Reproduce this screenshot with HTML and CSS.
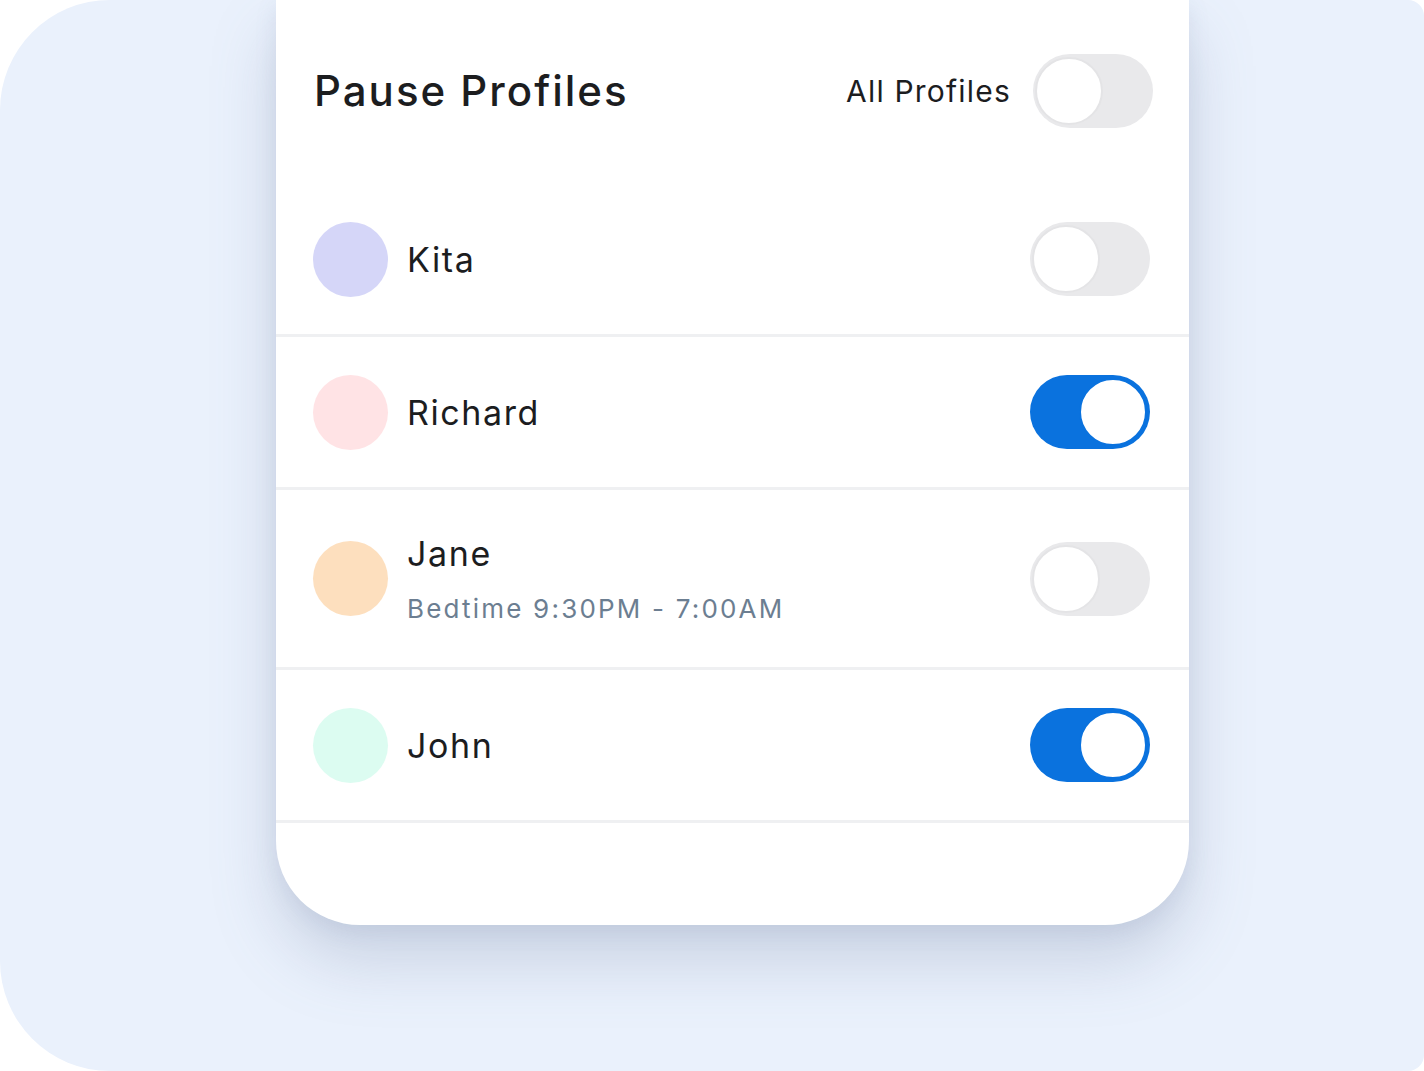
FILE: index.html
```html
<!doctype html>
<html lang="en">
    <head>
        <title>Pause Profiles</title>
        <meta charset="utf-8" />
        <meta name="viewport" content="width=device-width, initial-scale=1"/>
        <link rel="stylesheet" href="styles.css">
    </head>
    <body>
        <div class="panel">
            <div class="card">
                <div class="card-head">
                    <h1>Pause Profiles</h1>
                    <div class="all">
                        <span>All Profiles</span>
                        <span class="switch" role="switch" aria-checked="false"></span>
                    </div>
                </div>

                <div class="profile">
                    <span class="avatar kita"></span>
                    <div class="who">
                        <div class="name">Kita</div>
                    </div>
                    <span class="switch" role="switch" aria-checked="false"></span>
                </div>

                <div class="profile">
                    <span class="avatar richard"></span>
                    <div class="who">
                        <div class="name">Richard</div>
                    </div>
                    <span class="switch" role="switch" aria-checked="true"></span>
                </div>

                <div class="profile tall">
                    <span class="avatar jane"></span>
                    <div class="who">
                        <div class="name">Jane</div>
                        <div class="note">Bedtime 9:30PM - 7:00AM</div>
                    </div>
                    <span class="switch" role="switch" aria-checked="false"></span>
                </div>

                <div class="profile">
                    <span class="avatar john"></span>
                    <div class="who">
                        <div class="name">John</div>
                    </div>
                    <span class="switch" role="switch" aria-checked="true"></span>
                </div>
            </div>
        </div>
    </body>
</html>
```

FILE: styles.css
```css
body {
    margin: 0;
    background-color: #fff;
    font-family: Inter, "Noto Sans", sans-serif;
    font-variant-ligatures: none;
    color: #1c1d1f;
}
.panel {
    background-color: #eaf1fc;
    border-radius: 110px 16px 16px 110px;
    height: 1071px;
    overflow: hidden;
    padding-left: 276px;
    box-sizing: border-box;
}
.card {
    background-color: #fff;
    width: 913px;
    height: 925px;
    border-radius: 0 0 84px 84px;
    box-shadow: 0 36px 64px rgba(110, 125, 160, 0.26), 0 6px 22px rgba(110, 125, 160, 0.12);
}
.card-head {
    display: flex;
    align-items: center;
    justify-content: space-between;
    height: 184px;
    padding: 0 36px 0 38px;
}
.card-head h1 {
    margin: 0 0 4px;
    font-size: 42px;
    font-weight: 500;
    letter-spacing: 2px;
}
.all {
    display: flex;
    align-items: center;
    gap: 22px;
    font-size: 30px;
    letter-spacing: 1.2px;
    margin-bottom: 2px;
}
.profile {
    display: flex;
    align-items: center;
    height: 150px;
    padding: 0 39px 0 37px;
    border-bottom: 3px solid #eff0f2;
}
.profile.tall {
    height: 177px;
}
.avatar {
    width: 75px;
    height: 75px;
    border-radius: 50%;
    flex: none;
}
.kita { background-color: #d5d6f8; }
.richard { background-color: #ffe3e5; }
.jane { background-color: #fddfbe; }
.john { background-color: #dcfcf1; }
.who {
    flex: 1;
    margin-left: 19px;
}
.name {
    font-size: 34px;
    letter-spacing: 1.6px;
}
.note {
    margin-top: 19px;
    font-size: 26px;
    letter-spacing: 2.2px;
    color: #6c7e91;
}
.switch {
    position: relative;
    display: block;
    flex: none;
    width: 120px;
    height: 74px;
    border-radius: 37px;
    background-color: #e9e9eb;
}
.switch::after {
    content: '';
    position: absolute;
    top: 3px;
    left: 2px;
    width: 64px;
    height: 64px;
    border-radius: 50%;
    background-color: #fff;
    border: 2px solid #e4e4e6;
}
.switch[aria-checked=true] {
    background-color: #0a72de;
}
.switch[aria-checked=true]::after {
    left: auto;
    right: 3px;
    border-color: #0a72de;
}
```
